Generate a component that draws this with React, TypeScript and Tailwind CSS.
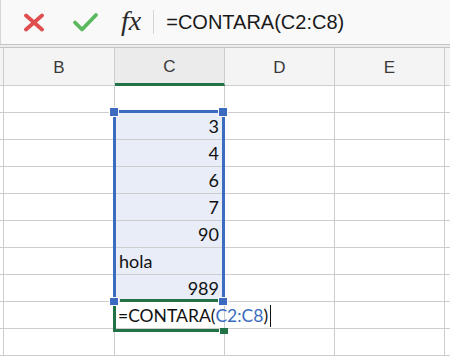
const rows: { value: string; align: 'left' | 'right' }[] = [
  { value: '', align: 'right' },
  { value: '3', align: 'right' },
  { value: '4', align: 'right' },
  { value: '6', align: 'right' },
  { value: '7', align: 'right' },
  { value: '90', align: 'right' },
  { value: 'hola', align: 'left' },
  { value: '989', align: 'right' },
  { value: '', align: 'left' },
  { value: '', align: 'left' },
]

const cellFont = { fontFamily: 'Lato, "Open Sans", sans-serif' }

const FormulaBar = () => {
  return (
    <div className="flex h-[44px] items-center bg-[#f9f9f9] border-l border-[#d6d6d6]">
      {/* cancel */}
      <svg width="22" height="19" viewBox="0 0 22 19" className="ml-[22px]">
        <path d="M3 2.5 L19 16.5 M19 2.5 L3 16.5" stroke="#e04f4f" strokeWidth="3.8" strokeLinecap="round" />
      </svg>
      {/* enter */}
      <svg width="27" height="21" viewBox="0 0 27 21" className="ml-[27px]">
        <path d="M3 10.5 L10 17.5 L24 3" stroke="#5cb85c" strokeWidth="3.8" fill="none" strokeLinecap="round" strokeLinejoin="round" />
      </svg>
      <span
        className="ml-[22px] text-[28px] italic leading-none text-[#2a2a2a] -mt-[3px]"
        style={{ fontFamily: '"Liberation Serif", serif' }}
      >
        fx
      </span>
      <div className="ml-[12px] h-[24px] w-px bg-[#d4d4d4]" />
      <span
        className="ml-[12px] text-[20px] text-[#1a1a1a] leading-none"
        style={{ fontFamily: '"Liberation Sans", Arial, sans-serif' }}
      >
        =CONTARA(C2:C8)
      </span>
    </div>
  )
}

const Header = () => {
  const cols = ['B', 'C', 'D', 'E']
  return (
    <div
      className="grid grid-cols-[4px_111px_110px_110px_110px_1fr] h-[38px] text-[17px] text-[#3a3a3a]"
      style={{ fontFamily: '"Liberation Sans", Arial, sans-serif' }}
    >
      <div className="bg-[#f4f4f4] border-r border-b border-[#cdcdcd]" />
      {cols.map((c) => (
        <div
          key={c}
          className={
            c === 'C'
              ? 'flex items-center justify-center bg-[#ebebeb] border-r border-[#cdcdcd] border-b-[3px] border-b-[#217346]'
              : 'flex items-center justify-center bg-[#f4f4f4] border-r border-b border-[#cdcdcd]'
          }
        >
          <span className="mt-[2px]">{c}</span>
        </div>
      ))}
      <div className="bg-[#f4f4f4] border-b border-[#cdcdcd]" />
    </div>
  )
}

export default function App() {
  return (
    <div className="relative w-[450px] h-[359px] overflow-hidden bg-white">
      <FormulaBar />
      <div className="h-[4px] bg-[#ececec] border-t border-b border-[#c4c4c4]" />
      <Header />

      {/* cells */}
      {rows.map((r, i) => {
        const selected = i >= 1 && i <= 7
        return (
          <div key={i} className="grid grid-cols-[4px_111px_110px_110px_110px_1fr] h-[27px]">
            <div className="border-r border-b border-[#cdcdcd]" />
            <div className="border-r border-b border-[#cdcdcd]" />
            <div
              className={
                (selected ? 'bg-[#e8edf8] ' : '') +
                'flex items-end border-r border-b border-[#cdcdcd] pb-[3px] text-[18px] leading-[20px] text-[#111] ' +
                (r.align === 'right' ? 'justify-end pr-[5px]' : 'justify-start pl-[4px]')
              }
              style={cellFont}
            >
              {r.value}
            </div>
            <div className="border-r border-b border-[#cdcdcd]" />
            <div className="border-r border-b border-[#cdcdcd]" />
            <div className="border-b border-[#cdcdcd]" />
          </div>
        )
      })}

      {/* selection range C2:C8 */}
      <div className="absolute left-[113px] top-[110px] w-[112px] h-[192px] border-t-[3px] border-l-[3px] border-r-[3px] border-[#3b6cc0]" />
      <div className="absolute left-[110px] top-[108px] w-[8px] h-[8px] bg-[#3b6cc0] outline outline-1 outline-white" />
      <div className="absolute left-[219px] top-[108px] w-[8px] h-[8px] bg-[#3b6cc0] outline outline-1 outline-white" />

      {/* editing cell C9 */}
      <div className="absolute left-[120px] top-[299px] w-[99px] h-[3px] bg-[#217346]" />
      <div className="absolute left-[113px] top-[304px] w-[3px] h-[28px] bg-[#217346]" />
      <div className="absolute left-[113px] top-[329px] w-[106px] h-[3px] bg-[#217346]" />
      <div className="absolute left-[220px] top-[328px] w-[8px] h-[6px] bg-[#217346]" />
      <div className="absolute left-[110px] top-[298px] w-[8px] h-[7px] bg-[#3b6cc0] outline outline-1 outline-white" />
      <div className="absolute left-[219px] top-[298px] w-[8px] h-[7px] bg-[#3b6cc0] outline outline-1 outline-white" />

      <div
        className="absolute left-[118px] top-[305px] flex items-center text-[17.5px] leading-[20px] text-[#111]"
        style={cellFont}
      >
        <span>=CONTARA(</span>
        <span className="text-[#3b6cc0]">C2:C8</span>
        <span>)</span>
        <span className="ml-[2px] h-[22px] w-px bg-[#111]" />
      </div>
    </div>
  )
}
